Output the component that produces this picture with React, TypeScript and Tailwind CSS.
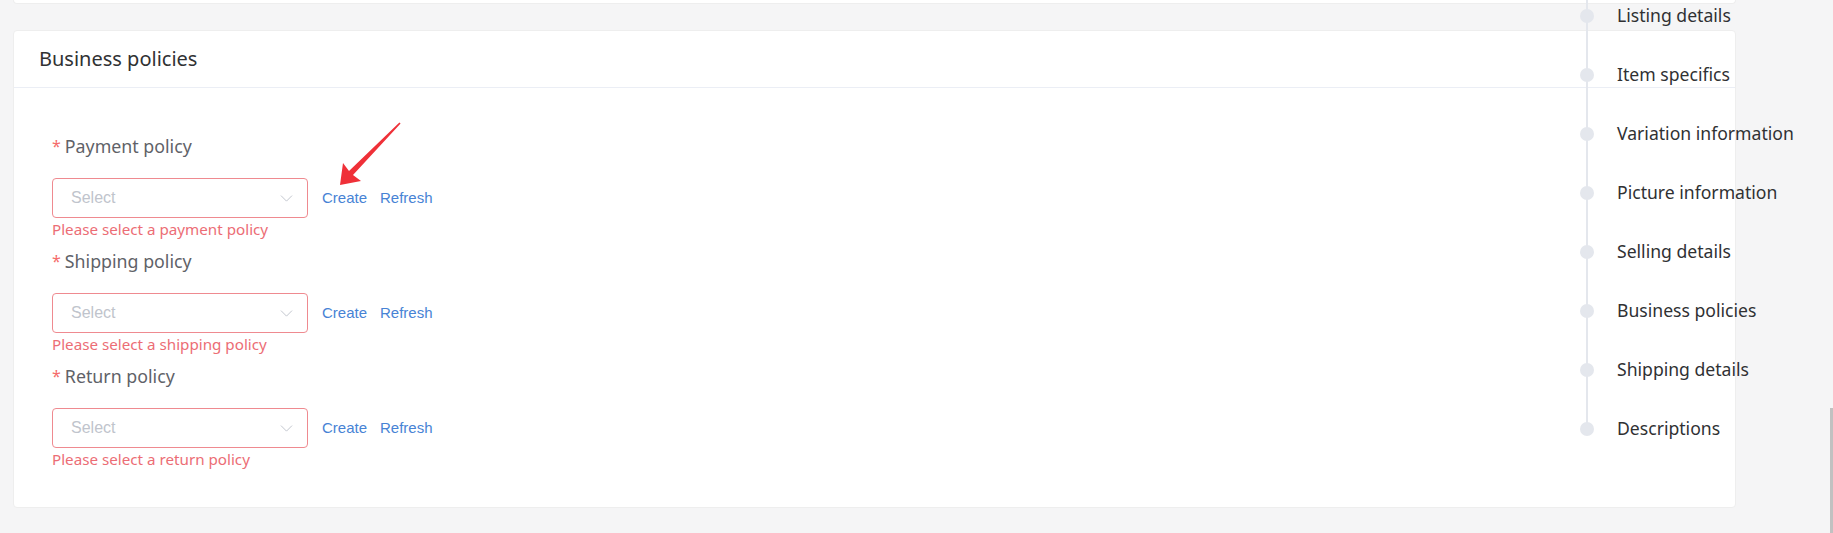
import { ChevronDown } from "lucide-react"

const policies = [
    { label: "Payment policy", error: "Please select a payment policy" },
    { label: "Shipping policy", error: "Please select a shipping policy" },
    { label: "Return policy", error: "Please select a return policy" },
]

const anchors = [
    "Listing details",
    "Item specifics",
    "Variation information",
    "Picture information",
    "Selling details",
    "Business policies",
    "Shipping details",
    "Descriptions",
]

const PolicyField = ({ label, error }: { label: string; error: string }) => (
    <div className="flex flex-col">
        <div className="h-[24px] flex items-center text-[17.8px] text-[#5f6268]">
            <span className="text-[#f56c6c] mr-[4px] text-[16px]">*</span>
            {label}
        </div>
        <div className="mt-[20px] flex items-center">
            <div className="w-[256px] h-[40px] rounded-[4px] border border-[#ef8a90] bg-white flex items-center justify-between pl-[18px] pr-[10px] font-['Liberation_Sans',sans-serif]">
                <span className="text-[16px] text-[#c0c4cc]">Select</span>
                <ChevronDown size={21} strokeWidth={1.1} color="#c0c4cc" />
            </div>
            <div className="ml-[14px] flex gap-[13px] text-[15px] text-[#4783d5] font-['Liberation_Sans',sans-serif]">
                <span>Create</span>
                <span>Refresh</span>
            </div>
        </div>
        <div className="mt-[1px] h-[20px] leading-[20px] text-[15.2px] text-[#ec6d75]">
            {error}
        </div>
    </div>
)

export default function App() {
    return (
        <div className="relative h-[533px] overflow-hidden bg-[#f5f5f6] font-['Noto_Sans',sans-serif]">
            <div className="w-[1736px] pl-[13px]">
                <div className="h-[4px] bg-white rounded-b-[4px] border-x border-b border-[#eeeeee]" />
                <div className="mt-[26px] h-[478px] bg-white rounded-[4px] border border-[#eeeeee]">
                    <div className="h-[57px] px-[25px] flex items-center border-b border-[#ebeef5] text-[20px] text-[#303133]">
                        Business policies
                    </div>
                    <div className="pl-[38px] pt-[46px] flex flex-col gap-[10px]">
                        {policies.map((p) => (
                            <PolicyField key={p.label} {...p} />
                        ))}
                    </div>
                </div>
            </div>

            <svg
                className="absolute left-[330px] top-[115px]"
                width="80"
                height="80"
                viewBox="0 0 80 80"
            >
                <polygon
                    points="70.6,8.5 23,60 31,66 10,70 13,48 19,56 69.4,7.5"
                    fill="#ef3038"
                />
            </svg>

            <ul className="absolute left-[1580px] top-[-14px]">
                <div className="absolute left-[6px] top-0 bottom-[29px] w-[2px] bg-[#e4e7ed]" />
                {anchors.map((a) => (
                    <li key={a} className="relative h-[59px] flex items-center">
                        <span className="w-[14px] h-[14px] rounded-full bg-[#e4e7ed]" />
                        <span className="ml-[23px] text-[17.6px] text-[#303133] whitespace-nowrap">
                            {a}
                        </span>
                    </li>
                ))}
            </ul>

            <div className="absolute right-0 top-[408px] bottom-0 w-[3px] bg-[#c1c1c1]" />
        </div>
    )
}
